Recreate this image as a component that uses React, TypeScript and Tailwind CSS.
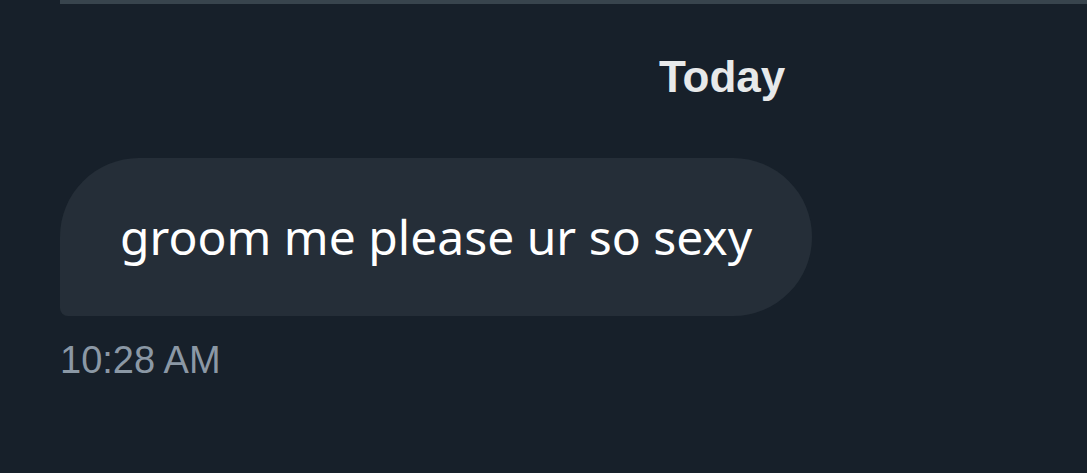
export default function App() {
  return (
    <div className="w-[1087px] h-[473px] bg-[#17202a] overflow-hidden flex flex-col">
      <div className="ml-[60px] h-[4px] bg-[#38444d]" />
      <div className="pl-[659px] pt-[45px] h-[120px]">
        <span
          className="text-[44px] leading-[56px] font-bold text-[#e7e9ea]"
          style={{ fontFamily: '"Liberation Sans", Arial, sans-serif' }}
        >
          Today
        </span>
      </div>
      <div className="pl-[60px] pt-[34px]">
        <div className="w-[752px] h-[158px] bg-[#252e38] rounded-[79px] rounded-bl-[8px] flex items-center pl-[60px]">
          <span
            className="text-[48px] leading-[60px] text-white"
            style={{ fontFamily: '"Noto Sans", "Open Sans", sans-serif' }}
          >
            groom me please ur so sexy
          </span>
        </div>
      </div>
      <div className="pl-[60px] pt-[20px]">
        <span
          className="text-[38px] leading-[48px] text-[#8b98a5]"
          style={{ fontFamily: '"Liberation Sans", Arial, sans-serif' }}
        >
          10:28 AM
        </span>
      </div>
    </div>
  );
}
